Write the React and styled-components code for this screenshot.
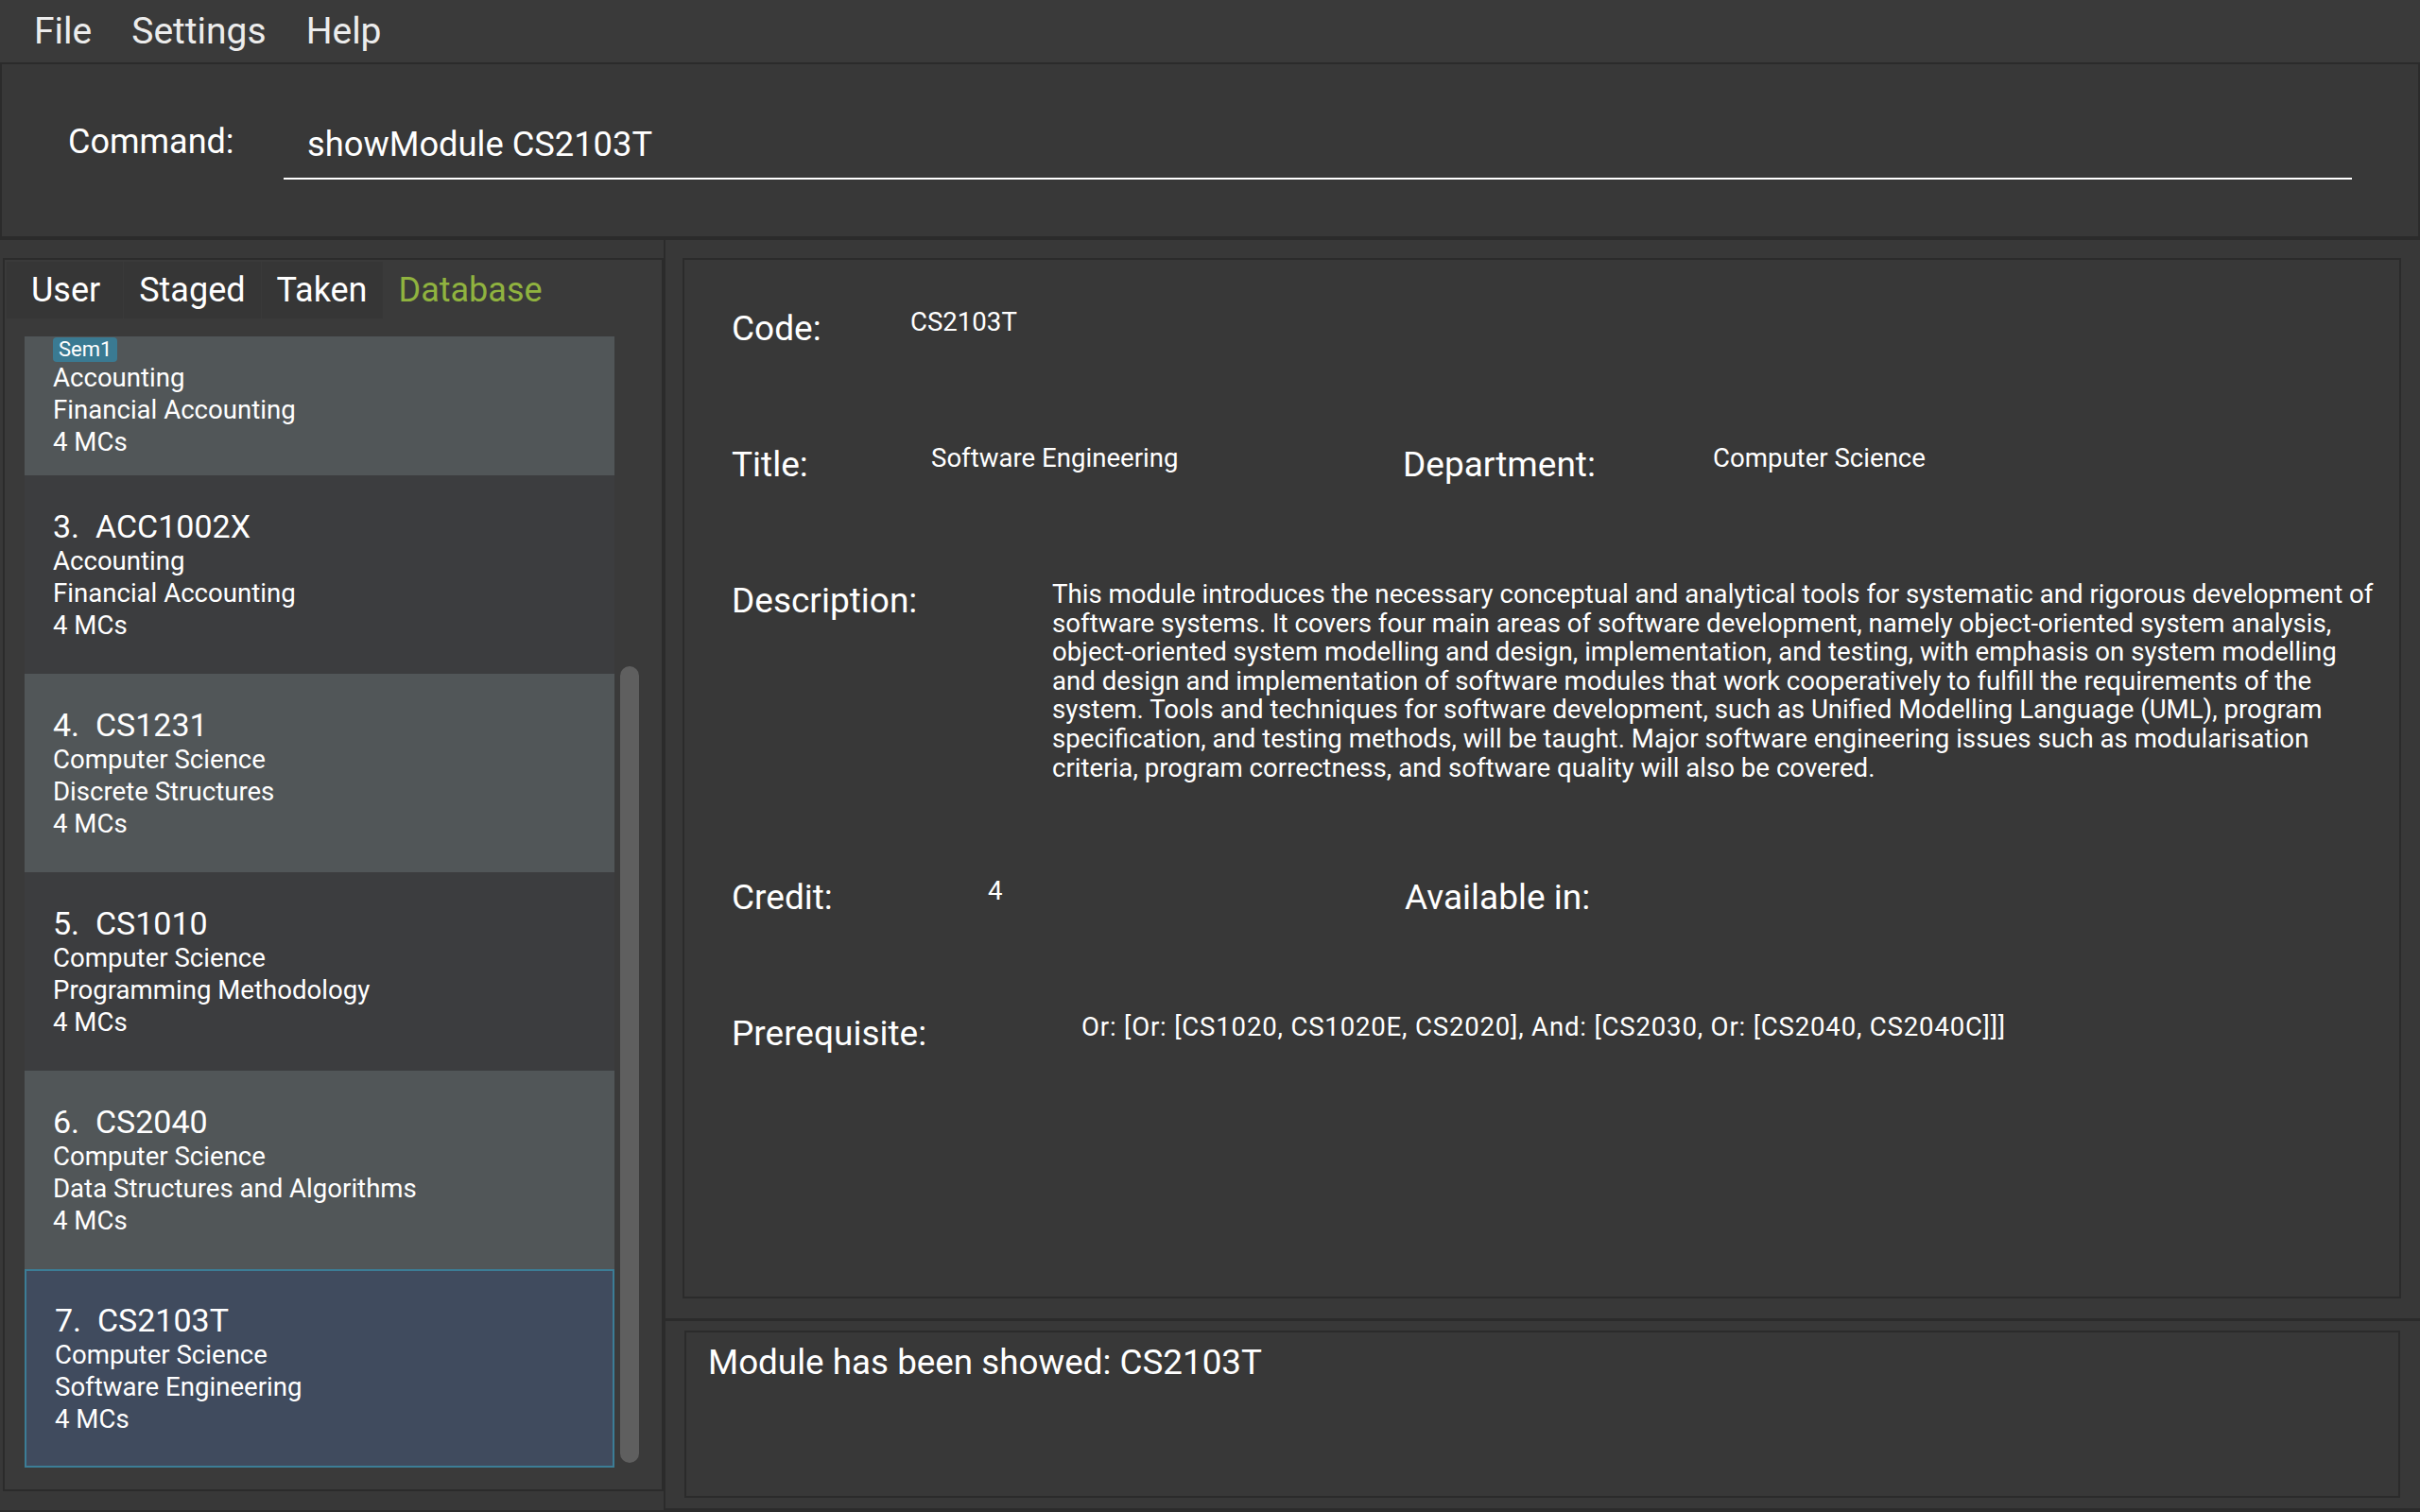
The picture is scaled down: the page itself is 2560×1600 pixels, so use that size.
import React from "react";
import styled, { createGlobalStyle } from "styled-components";

const GlobalStyle = createGlobalStyle`
  html, body {
    margin: 0;
    padding: 0;
    background: #383838;
  }
  body {
    font-family: Roboto, "Liberation Sans", sans-serif;
    color: #ffffff;
  }
`;

const Window = styled.div`
  width: 2560px;
  height: 1600px;
  overflow: hidden;
  display: flex;
  flex-direction: column;
  background: #383838;
`;

const MenuBar = styled.div`
  display: flex;
  align-items: center;
  height: 66px;
  padding-left: 15px;
  background: #3a3a3a;
  border-bottom: 2px solid #2b2b2b;
  flex-shrink: 0;
`;

const MenuItem = styled.div`
  padding: 0 21px;
  font-size: 39px;
  line-height: 66px;
  color: #ececec;
`;

const CommandPanel = styled.div`
  display: flex;
  align-items: flex-start;
  height: 186px;
  padding: 60px 70px 0 70px;
  box-sizing: border-box;
  border: 2px solid #2b2b2b;
  border-top: 0;
  border-bottom: 4px solid #2b2b2b;
  flex-shrink: 0;
`;

const CommandLabel = styled.div`
  width: 228px;
  flex-shrink: 0;
  font-size: 36px;
  line-height: 44px;
`;

const CommandField = styled.div`
  flex: 1;
  margin-top: 3px;
  padding: 0 0 13px 25px;
  font-size: 36.3px;
  line-height: 44px;
  border-bottom: 2px solid #ffffff;
`;

const Body = styled.div`
  flex: 1;
  display: grid;
  grid-template-columns: 702px 1fr;
  min-height: 0;
`;

const LeftColumn = styled.div`
  display: flex;
  flex-direction: column;
  padding-top: 19px;
  min-height: 0;
`;

const ListBox = styled.div`
  margin-left: 3px;
  height: 1305px;
  box-sizing: border-box;
  border: 2px solid #2b2b2b;
  background: #3a3a3a;
  display: flex;
  flex-direction: column;
`;

const TabBar = styled.div`
  display: flex;
  height: 60px;
  margin-top: 2px;
  padding-left: 2px;
  flex-shrink: 0;
`;

const Tab = styled.div`
  padding: 0 16px;
  font-size: 36px;
  line-height: 60px;
  color: ${(p) => (p.$active ? "#90b33f" : "#ffffff")};
  background: ${(p) => (p.$active ? "transparent" : "#363636")};
  margin-right: 1px;

  &:first-child {
    padding-left: 26px;
    padding-right: 24px;
  }
`;

const ListRow = styled.div`
  display: flex;
  margin-top: 19px;
  padding-left: 21px;
  height: 1197px;
`;

const Viewport = styled.div`
  width: 624px;
  height: 100%;
  overflow: hidden;
  display: flex;
  flex-direction: column;
  justify-content: flex-end;
`;

const Cell = styled.div`
  flex-shrink: 0;
  height: 210px;
  box-sizing: border-box;
  overflow: hidden;
  background: ${(p) =>
    p.$selected ? "#404b5e" : p.$even ? "#515658" : "#3c3d3f"};
  border: ${(p) => (p.$selected ? "2px solid #3c7d96" : "0")};
  padding-left: 30px;
  padding-top: ${(p) => (p.$tagged ? "24px" : p.$selected ? "32px" : "34px")};
`;

const CellTitle = styled.div`
  font-size: 34px;
  line-height: 40px;
  white-space: pre;
`;

const CellLine = styled.div`
  font-size: 27.6px;
  line-height: 34px;
  white-space: nowrap;
`;

const Tags = styled.div`
  display: flex;
  height: 26px;
`;

const Tag = styled.span`
  background: #3a7a92;
  border-radius: 4px;
  padding: 0 6px;
  font-size: 22px;
  line-height: 26px;
`;

const ScrollTrack = styled.div`
  width: 20px;
  margin-left: 6px;
  padding-top: 349px;
`;

const ScrollThumb = styled.div`
  height: 843px;
  border-radius: 10px;
  background: #5f5f5f;
`;

const LeftFooter = styled.div`
  height: 20px;
  border-bottom: 2px solid #2b2b2b;
`;

const RightColumn = styled.div`
  display: flex;
  flex-direction: column;
  border-left: 2px solid #2b2b2b;
  border-right: 3px solid #2b2b2b;
  min-height: 0;
`;

const DetailSection = styled.div`
  height: 1144px;
  box-sizing: border-box;
  padding: 19px 20px 21px 18px;
  border-bottom: 3px solid #2b2b2b;
  display: flex;
`;

const DetailBox = styled.div`
  flex: 1;
  border: 2px solid #2b2b2b;
  padding: 51px 20px 0 50px;
  display: flex;
  flex-direction: column;
  gap: 100px;
`;

const FieldRow = styled.div`
  display: flex;
  align-items: flex-start;
`;

const Pair = styled.div`
  display: flex;
  align-items: flex-start;
  width: ${(p) => (p.$w ? `${p.$w}px` : "auto")};
  flex-shrink: 0;
`;

const Label = styled.div`
  width: ${(p) => p.$w}px;
  flex-shrink: 0;
  font-size: 37px;
  line-height: 44px;
`;

const Value = styled.div`
  font-size: 27.6px;
  line-height: 30px;
  letter-spacing: ${(p) => p.$spacing || 0}px;
  white-space: nowrap;
`;

const Description = styled.div`
  width: 1405px;
  font-size: 27.65px;
  line-height: 30.6px;
`;

const ResultSection = styled.div`
  flex: 1;
  padding: 10px 21px 11px 20px;
  border-bottom: 4px solid #2b2b2b;
  display: flex;
`;

const ResultBox = styled.div`
  flex: 1;
  border: 2px solid #2b2b2b;
  padding: 10px 23px;
  font-size: 36.8px;
  line-height: 44px;
`;

const modules = [
  { no: 2, code: "ACC1002", dept: "Accounting", title: "Financial Accounting", tags: ["Sem1"] },
  { no: 3, code: "ACC1002X", dept: "Accounting", title: "Financial Accounting" },
  { no: 4, code: "CS1231", dept: "Computer Science", title: "Discrete Structures" },
  { no: 5, code: "CS1010", dept: "Computer Science", title: "Programming Methodology" },
  { no: 6, code: "CS2040", dept: "Computer Science", title: "Data Structures and Algorithms" },
  { no: 7, code: "CS2103T", dept: "Computer Science", title: "Software Engineering" },
];

const description =
  "This module introduces the necessary conceptual and analytical tools for systematic and rigorous development of software systems. It covers four main areas of software development, namely object-oriented system analysis, object-oriented system modelling and design, implementation, and testing, with emphasis on system modelling and design and implementation of software modules that work cooperatively to fulfill the requirements of the system. Tools and techniques for software development, such as Unified Modelling Language (UML), program specification, and testing methods, will be taught. Major software engineering issues such as modularisation criteria, program correctness, and software quality will also be covered.";

const App = () => {
  const selected = 7;

  return (
    <Window>
      <GlobalStyle />
      <MenuBar>
        <MenuItem>File</MenuItem>
        <MenuItem>Settings</MenuItem>
        <MenuItem>Help</MenuItem>
      </MenuBar>

      <CommandPanel>
        <CommandLabel>Command:</CommandLabel>
        <CommandField>showModule CS2103T</CommandField>
      </CommandPanel>

      <Body>
        <LeftColumn>
          <ListBox>
            <TabBar>
              <Tab>User</Tab>
              <Tab>Staged</Tab>
              <Tab>Taken</Tab>
              <Tab $active>Database</Tab>
            </TabBar>
            <ListRow>
              <Viewport>
                {modules.map((m) => (
                  <Cell
                    key={m.no}
                    $even={m.no % 2 === 0}
                    $selected={m.no === selected}
                    $tagged={!!m.tags}
                  >
                    <CellTitle>{`${m.no}.  ${m.code}`}</CellTitle>
                    {m.tags && (
                      <Tags>
                        {m.tags.map((t) => (
                          <Tag key={t}>{t}</Tag>
                        ))}
                      </Tags>
                    )}
                    <CellLine>{m.dept}</CellLine>
                    <CellLine>{m.title}</CellLine>
                    <CellLine>4 MCs</CellLine>
                  </Cell>
                ))}
              </Viewport>
              <ScrollTrack>
                <ScrollThumb />
              </ScrollTrack>
            </ListRow>
          </ListBox>
          <LeftFooter />
        </LeftColumn>

        <RightColumn>
          <DetailSection>
            <DetailBox>
              <FieldRow>
                <Label $w={189}>Code:</Label>
                <Value>CS2103T</Value>
              </FieldRow>

              <FieldRow>
                <Pair $w={710}>
                  <Label $w={211}>Title:</Label>
                  <Value>Software Engineering</Value>
                </Pair>
                <Pair>
                  <Label $w={328}>Department:</Label>
                  <Value>Computer Science</Value>
                </Pair>
              </FieldRow>

              <FieldRow>
                <Label $w={339}>Description:</Label>
                <Description>{description}</Description>
              </FieldRow>

              <FieldRow>
                <Pair $w={712}>
                  <Label $w={271}>Credit:</Label>
                  <Value>4</Value>
                </Pair>
                <Pair>
                  <Label $w={300}>Available in:</Label>
                </Pair>
              </FieldRow>

              <FieldRow>
                <Label $w={370}>Prerequisite:</Label>
                <Value $spacing={0.8}>
                  Or: [Or: [CS1020, CS1020E, CS2020], And: [CS2030, Or: [CS2040, CS2040C]]]
                </Value>
              </FieldRow>
            </DetailBox>
          </DetailSection>

          <ResultSection>
            <ResultBox>Module has been showed: CS2103T</ResultBox>
          </ResultSection>
        </RightColumn>
      </Body>
    </Window>
  );
};

export default App;
